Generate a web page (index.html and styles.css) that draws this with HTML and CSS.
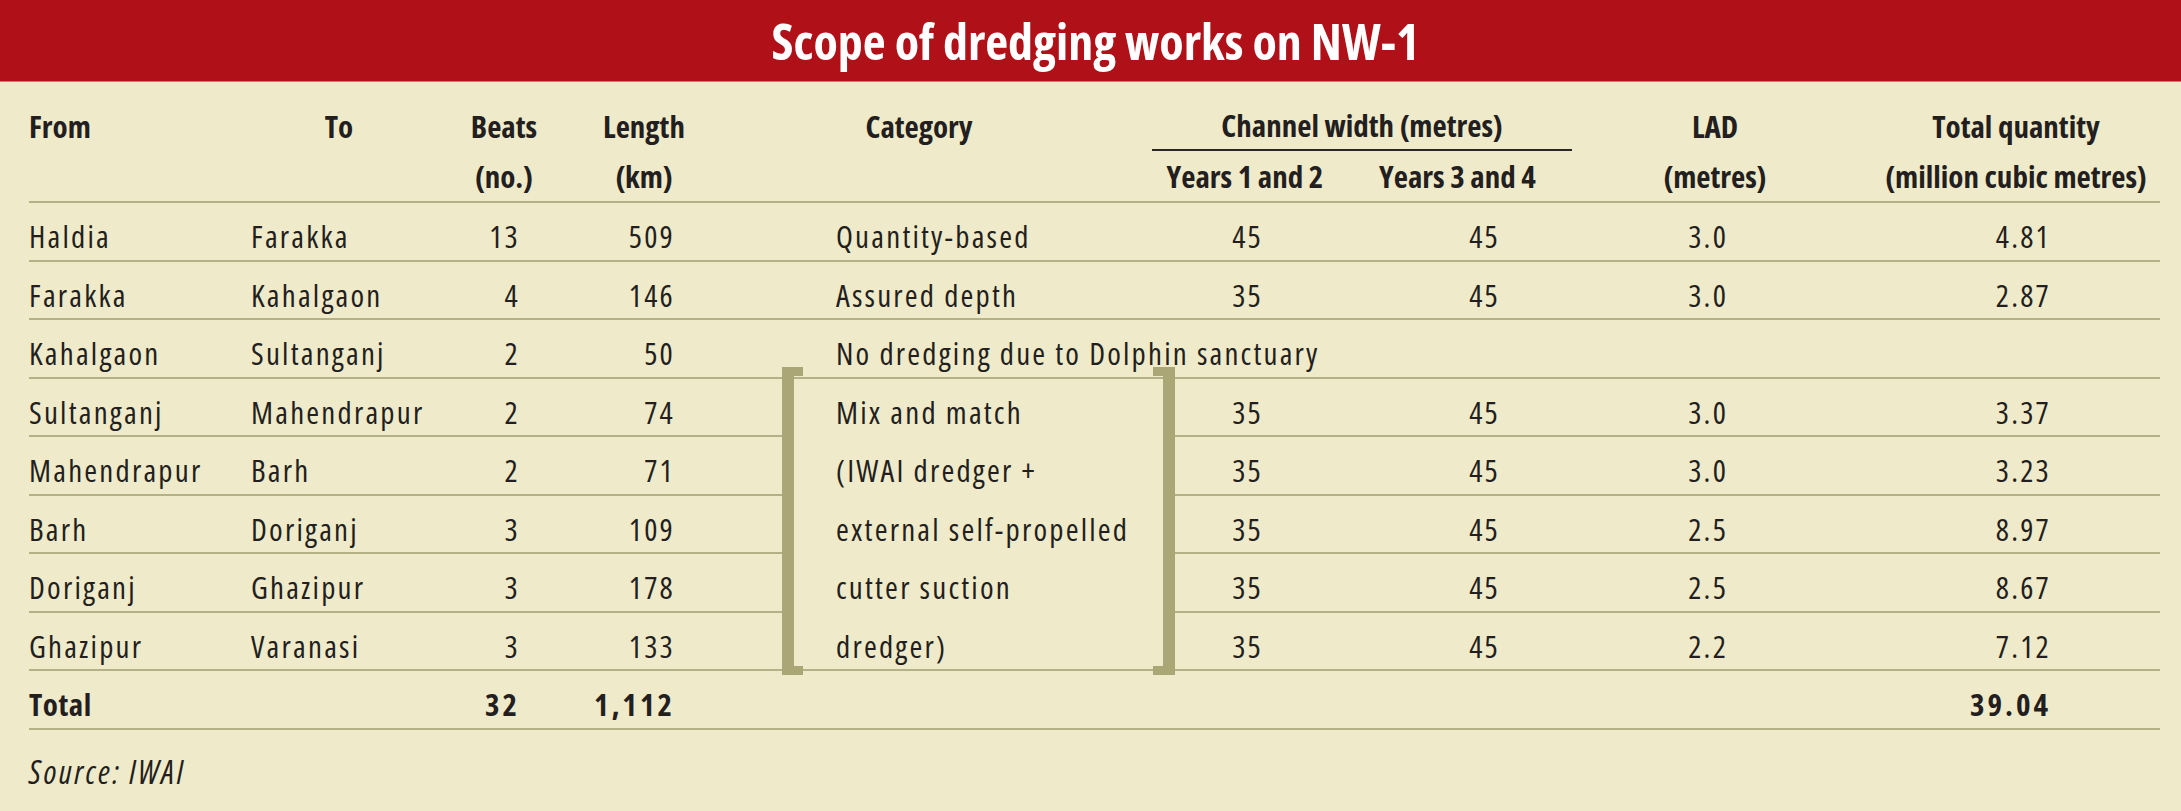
FILE: index.html
```html
<!DOCTYPE html>
<html lang="en">
<head>
<meta charset="utf-8">
<title>Scope of dredging works on NW-1</title>
<link rel="stylesheet" href="styles.css">
</head>
<body>
<header class="banner"><h1 class="title">Scope of dredging works on NW-1</h1></header>
<main class="content">
  <table class="scope">
    <colgroup>
      <col class="c-from"><col class="c-to"><col class="c-beats"><col class="c-length"><col class="c-gap">
      <col class="c-cat"><col class="c-y12"><col class="c-y34"><col class="c-lad"><col class="c-total">
    </colgroup>
    <thead>
      <tr class="h1">
        <th class="al-left">From</th>
        <th>To</th>
        <th>Beats</th>
        <th>Length</th>
        <th></th>
        <th class="cat-h">Category</th>
        <th colspan="2" class="chan"><div class="chan-title">Channel width (metres)</div></th>
        <th>LAD</th>
        <th class="tot-h">Total quantity</th>
      </tr>
      <tr class="h2">
        <th></th>
        <th></th>
        <th>(no.)</th>
        <th>(km)</th>
        <th></th>
        <th></th>
        <th><span class="wide">Years 1 and 2</span></th>
        <th>Years 3 and 4</th>
        <th>(metres)</th>
        <th class="tot-h">(million cubic metres)</th>
      </tr>
    </thead>
    <tbody>
      <tr>
        <td>Haldia</td><td>Farakka</td><td class="n beats">13</td><td class="n len">509</td><td></td>
        <td class="cat">Quantity-based</td><td class="n y12">45</td><td class="n y34">45</td><td class="n lad">3.0</td><td class="n tq">4.81</td>
      </tr>
      <tr>
        <td>Farakka</td><td>Kahalgaon</td><td class="n beats">4</td><td class="n len">146</td><td></td>
        <td class="cat">Assured depth</td><td class="n y12">35</td><td class="n y34">45</td><td class="n lad">3.0</td><td class="n tq">2.87</td>
      </tr>
      <tr>
        <td>Kahalgaon</td><td>Sultanganj</td><td class="n beats">2</td><td class="n len">50</td><td></td>
        <td class="cat" colspan="5">No dredging due to Dolphin sanctuary</td>
      </tr>
      <tr>
        <td>Sultanganj</td><td>Mahendrapur</td><td class="n beats">2</td><td class="n len">74</td><td></td>
        <td class="mix" rowspan="5">
          <div class="bracket">
            <div>Mix and match</div>
            <div>(IWAI dredger +</div>
            <div>external self-propelled</div>
            <div>cutter suction</div>
            <div>dredger)</div>
          </div>
        </td>
        <td class="n y12">35</td><td class="n y34">45</td><td class="n lad">3.0</td><td class="n tq">3.37</td>
      </tr>
      <tr>
        <td>Mahendrapur</td><td>Barh</td><td class="n beats">2</td><td class="n len">71</td><td></td>
        <td class="n y12">35</td><td class="n y34">45</td><td class="n lad">3.0</td><td class="n tq">3.23</td>
      </tr>
      <tr>
        <td>Barh</td><td>Doriganj</td><td class="n beats">3</td><td class="n len">109</td><td></td>
        <td class="n y12">35</td><td class="n y34">45</td><td class="n lad">2.5</td><td class="n tq">8.97</td>
      </tr>
      <tr>
        <td>Doriganj</td><td>Ghazipur</td><td class="n beats">3</td><td class="n len">178</td><td></td>
        <td class="n y12">35</td><td class="n y34">45</td><td class="n lad">2.5</td><td class="n tq">8.67</td>
      </tr>
      <tr>
        <td>Ghazipur</td><td>Varanasi</td><td class="n beats">3</td><td class="n len">133</td><td></td>
        <td class="n y12">35</td><td class="n y34">45</td><td class="n lad">2.2</td><td class="n tq">7.12</td>
      </tr>
      <tr class="total">
        <td>Total</td><td></td><td class="n beats">32</td><td class="n len">1,112</td><td></td>
        <td></td><td></td><td></td><td></td><td class="n tq">39.04</td>
      </tr>
    </tbody>
  </table>
  <p class="source">Source: IWAI</p>
</main>
</body>
</html>
```

FILE: styles.css
```css
html, body {
  margin: 0;
  padding: 0;
  background: #efeac9;
}

body {
  color: #231f20;
  font-family: "Open Sans", "Liberation Sans", sans-serif;
  font-stretch: 75%;
  width: 2181px;
  height: 811px;
  overflow: hidden;
}

.banner {
  background: #b01018;
  height: 82px;
  box-sizing: border-box;
  padding-top: 2px;
  border-bottom: 1px solid #d07a72;
}

.title {
  margin: 0;
  padding-left: 10px;
  color: #ffffff;
  font-size: 50px;
  font-weight: 700;
  line-height: 78px;
  text-align: center;
}

.content {
  padding-left: 29px;
}

.scope {
  width: 2131px;
  table-layout: fixed;
  border-collapse: separate;
  border-spacing: 0;
}

.c-from { width: 222px; }
.c-to { width: 176px; }
.c-beats { width: 154px; }
.c-length { width: 126px; }
.c-gap { width: 75px; }
.c-cat { width: 393px; }
.c-y12 { width: 140px; }
.c-y34 { width: 285px; }
.c-lad { width: 230px; }
.c-total { width: 330px; }

.scope th {
  padding: 0;
  font-size: 31px;
  font-weight: 700;
  line-height: 50px;
  text-align: center;
  vertical-align: top;
  white-space: nowrap;
}

.scope .h1 th {
  padding-top: 19px;
}

.scope .h2 th {
  border-bottom: 2px solid #b5b187;
}

.scope th.al-left { text-align: left; }
.scope th.cat-h { padding-right: 119px; }
.scope th.tot-h { padding-left: 42px; }

.chan-title {
  line-height: 48px;
  border-bottom: 2px solid #2a2626;
  margin: 0 28px 0 -23px;
}

.wide {
  display: block;
  margin: 0 -30px;
}

.scope td {
  padding: 10px 0 0 0;
  font-size: 31px;
  letter-spacing: 2.2px;
  line-height: 46.5px;
  border-bottom: 2px solid #b5b187;
  white-space: nowrap;
  vertical-align: top;
}

.scope td.n { text-align: right; }
.scope td.beats { padding-right: 61px; }
.scope td.len { padding-right: 32px; }
.scope td.y12 { padding-right: 52px; }
.scope td.y34 { padding-right: 100px; }
.scope td.lad { padding-right: 102px; }
.scope td.tq { padding-right: 109px; }
.scope td.cat { padding-left: 54px; }

.scope td.mix {
  padding: 0;
}

.bracket {
  position: relative;
  height: 290.5px;
  box-sizing: border-box;
  padding: 4px 0 0 54px;
  line-height: 58.5px;
}

.bracket::before,
.bracket::after {
  content: "";
  position: absolute;
  top: -11.5px;
  bottom: -6px;
  border-style: solid;
  border-color: #aaa675;
}

.bracket::before {
  left: 0;
  width: 9px;
  border-width: 9px 0 9px 12px;
}

.bracket::after {
  right: 0;
  width: 10px;
  border-width: 9px 12px 9px 0;
}

.scope .total td {
  font-weight: 700;
  letter-spacing: 0.5px;
}

.scope .total td.n {
  letter-spacing: 3px;
}

.source {
  margin: 22px 0 0;
  font-size: 32px;
  font-style: italic;
  line-height: 40px;
  letter-spacing: 2.5px;
}
```
